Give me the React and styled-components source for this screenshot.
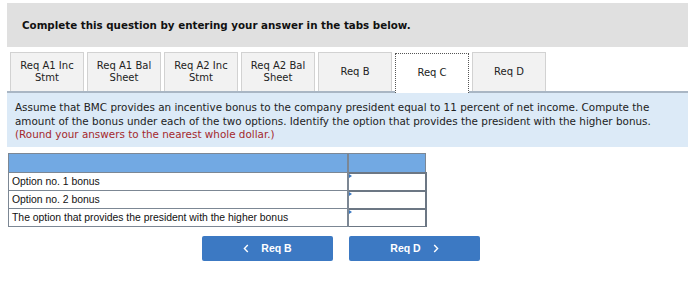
import React from 'react';
import styled, { createGlobalStyle } from 'styled-components';

const GlobalStyle = createGlobalStyle`
  body {
    margin: 0;
    background: #ffffff;
    font-family: "DejaVu Sans", Verdana, sans-serif;
  }
`;

const Page = styled.div`
  width: 700px;
  height: 287px;
  padding: 3px 12px 0 7px;
  box-sizing: border-box;
`;

const Instruction = styled.div`
  height: 44px;
  background: #e0e0e0;
  display: flex;
  align-items: center;
  padding-left: 15px;
  font-size: 10.3px;
  font-weight: bold;
  color: #111;
`;

const TabRow = styled.div`
  display: flex;
  gap: 3px;
  padding: 5px 0 0 3px;
  border-bottom: 2px solid #a9b6c4;
  height: 39px;
  align-items: flex-end;
`;

const Tab = styled.div`
  width: 74px;
  height: ${({ active }) => (active ? '40px' : '39px')};
  box-sizing: border-box;
  display: flex;
  align-items: center;
  justify-content: center;
  text-align: center;
  font-size: 10px;
  line-height: 12px;
  color: #222;
  background: ${({ active }) => (active ? '#ffffff' : '#f2f2f2')};
  border: ${({ active }) => (active ? '1px dotted #555' : '1px solid #d2d2d2')};
  border-bottom: none;
  margin-bottom: ${({ active }) => (active ? '-2px' : '0')};
  padding-bottom: ${({ active }) => (active ? '2px' : '0')};
  position: relative;
`;

const TabLabel = styled.span`
  white-space: pre-line;
`;

const InfoBox = styled.div`
  background: #dceaf7;
  padding: 8px 10px 5px 8px;
  font-size: 10.4px;
  line-height: 13.5px;
  color: #222;
`;

const Note = styled.span`
  color: #a4282c;
`;

const Table = styled.table`
  margin: 6px 0 0 1px;
  border-collapse: collapse;
  font-family: "Liberation Sans", Arial, sans-serif;
  font-size: 10.4px;
  color: #111;
`;

const HeadCell = styled.td`
  background: #72a9e3;
  height: 18px;
  padding: 0;
  border: 1px solid #7c8794;
  border-right-width: ${({ wide }) => (wide ? '2px' : '1px')};
  width: ${({ wide }) => (wide ? '338px' : '76px')};
`;

const LabelCell = styled.td`
  height: 16px;
  padding: 0 0 0 3px;
  border: 1px solid #7c8794;
  border-right-width: 2px;
  white-space: nowrap;
`;

const InputCell = styled.td`
  height: 16px;
  padding: 0;
  border: 1px solid #6c7784;
  border-width: 2px 2px 1px 2px;
  position: relative;
  &::before {
    content: '';
    position: absolute;
    left: 0;
    top: 0;
    border-left: 3px solid #3a78c2;
    border-top: 2px solid transparent;
    border-bottom: 2px solid transparent;
  }
`;

const Nav = styled.div`
  display: flex;
  gap: 16px;
  margin: 9px 0 0 195px;
`;

const NavButton = styled.div`
  width: 131px;
  height: 25px;
  background: #3c79c3;
  border-radius: 2px;
  color: #fff;
  font-family: "Liberation Sans", Arial, sans-serif;
  font-weight: bold;
  font-size: 10.5px;
  display: flex;
  align-items: center;
  justify-content: center;
  gap: 12px;
`;

const Chevron = ({ dir }) => (
  <svg width="6" height="9" viewBox="0 0 6 9">
    <path
      d={dir === 'left' ? 'M4.8 1 L1.4 4.5 L4.8 8' : 'M1.2 1 L4.6 4.5 L1.2 8'}
      fill="none"
      stroke="#fff"
      strokeWidth="1.4"
    />
  </svg>
);

const tabs = [
  'Req A1 Inc\nStmt',
  'Req A1 Bal\nSheet',
  'Req A2 Inc\nStmt',
  'Req A2 Bal\nSheet',
  'Req B',
  'Req C',
  'Req D',
];

const rows = [
  'Option no. 1 bonus',
  'Option no. 2 bonus',
  'The option that provides the president with the higher bonus',
];

export default function App() {
  return (
    <Page>
      <GlobalStyle />
      <Instruction>Complete this question by entering your answer in the tabs below.</Instruction>
      <TabRow>
        {tabs.map((t) => (
          <Tab key={t} active={t === 'Req C'}>
            <TabLabel>{t}</TabLabel>
          </Tab>
        ))}
      </TabRow>
      <InfoBox>
        Assume that BMC provides an incentive bonus to the company president equal to 11 percent of net income. Compute the
        amount of the bonus under each of the two options. Identify the option that provides the president with the higher bonus.{' '}
        <Note>(Round your answers to the nearest whole dollar.)</Note>
      </InfoBox>
      <Table>
        <tbody>
          <tr>
            <HeadCell wide />
            <HeadCell />
          </tr>
          {rows.map((r) => (
            <tr key={r}>
              <LabelCell>{r}</LabelCell>
              <InputCell />
            </tr>
          ))}
        </tbody>
      </Table>
      <Nav>
        <NavButton>
          <Chevron dir="left" />Req B
        </NavButton>
        <NavButton>
          Req D<Chevron dir="right" />
        </NavButton>
      </Nav>
    </Page>
  );
}
